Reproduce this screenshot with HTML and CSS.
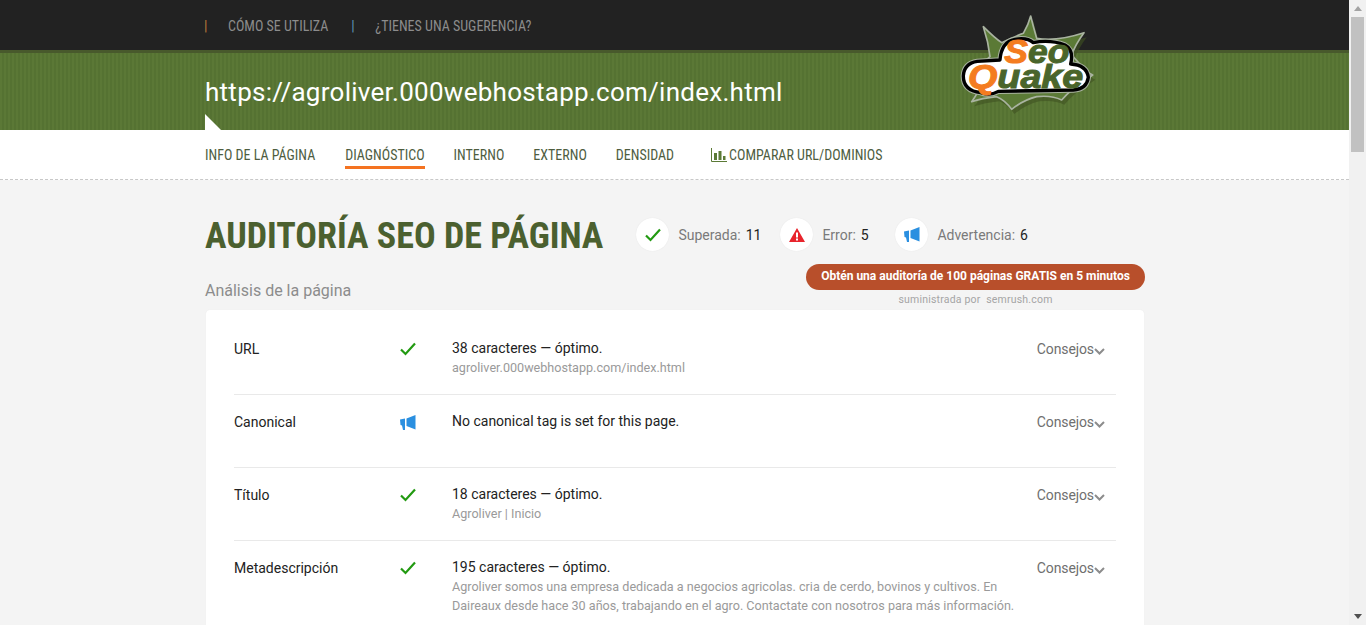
FILE: index.html
```html
<!DOCTYPE html>
<html lang="es">
<head>
<meta charset="utf-8">
<title>SeoQuake</title>
<link rel="stylesheet" href="styles.css">
</head>
<body>
<div class="page">
  <header class="topbar">
    <div class="wrap topbar-inner">
      <span class="sep sep-orange">|</span><a class="toplink">CÓMO SE UTILIZA</a>
      <span class="sep sep-blue">|</span><a class="toplink">¿TIENES UNA SUGERENCIA?</a>
    </div>
  </header>
  <section class="urlbar">
    <div class="wrap"><h1 class="url">https://agroliver.000webhostapp.com/index.html</h1></div>
    <span class="notch"></span>
  </section>
  <svg class="logo" viewBox="0 0 540 375" width="180" height="125" aria-label="SeoQuake">
    <path class="burst-shadow" d="M130 80Q165 115 185 128Q235 105 250 100Q265 75 272 48Q280 80 290 115Q350 125 432 98Q405 135 395 165L440 215L458 225L430 245Q395 265 365 300Q335 285 290 290Q250 300 215 328Q195 300 170 290Q125 295 95 305Q110 285 115 270L70 240L150 170Q145 125 130 80Z"/>
    <path class="burst" d="M130 80Q165 115 185 128Q235 105 250 100Q265 75 272 48Q280 80 290 115Q350 125 432 98Q405 135 395 165L440 215L458 225L430 245Q395 265 365 300Q335 285 290 290Q250 300 215 328Q195 300 170 290Q125 295 95 305Q110 285 115 270L70 240L150 170Q145 125 130 80Z"/>
    <path class="blob-edge" d="M70 228Q72 190 112 184L180 180Q184 125 225 118Q262 112 280 128Q330 118 375 135Q402 150 392 192Q440 195 445 232Q440 268 400 270L175 274Q150 288 122 278Q70 272 70 228Z"/>
    <path class="blob" d="M70 228Q72 190 112 184L180 180Q184 125 225 118Q262 112 280 128Q330 118 375 135Q402 150 392 192Q440 195 445 232Q440 268 400 270L175 274Q150 288 122 278Q70 272 70 228Z"/>
    <text class="logo-word"><tspan x="193" y="190" textLength="195" lengthAdjust="spacingAndGlyphs"><tspan class="logo-o">S</tspan>eo</tspan><tspan x="84" y="263" textLength="346" lengthAdjust="spacingAndGlyphs"><tspan class="logo-o">Q</tspan>uake</tspan></text>
  </svg>
  <nav class="tabs">
    <div class="wrap tabs-inner">
      <a class="tab tab-first">INFO DE LA PÁGINA</a>
      <a class="tab tab-active">DIAGNÓSTICO</a>
      <a class="tab">INTERNO</a>
      <a class="tab">EXTERNO</a>
      <a class="tab">DENSIDAD</a>
      <a class="tab tab-compare">
        <svg class="chart" viewBox="0 0 16 14" width="16" height="14"><path class="chart-axis" d="M.5 0v13.500H16"/><path d="M3 5h3v7H3zM7.500 3h3v9h-3zM12 8h2.500v4H12z"/></svg>
        COMPARAR URL/DOMINIOS</a>
    </div>
  </nav>
  <main class="wrap content">
    <div class="heading-row">
      <h2 class="title">AUDITORÍA SEO DE PÁGINA</h2>
      <div class="stats">
        <div class="stat">
          <span class="badge"><svg viewBox="0 0 16 14" width="16" height="14"><path class="ico-check" d="M1 7.500l4.500 4.500L15 1.500"/></svg></span>
          <span class="stat-label">Superada:</span><span class="stat-num">11</span>
        </div>
        <div class="stat stat-err">
          <span class="badge"><svg viewBox="0 0 16 14" width="16" height="14"><path class="ico-err" d="M8 0l8 14H0zM7 4.500v5h2v-5zM7 10.500v2h2v-2z"/></svg></span>
          <span class="stat-label">Error:</span><span class="stat-num">5</span>
        </div>
        <div class="stat stat-warn">
          <span class="badge"><svg viewBox="0 0 16 15" width="16" height="15"><path class="ico-warn" d="M15.500 0v14.500L6.500 11V3.500zM5 3.500V15H3L2 10.500.5 10 0 4.500z"/></svg></span>
          <span class="stat-label">Advertencia:</span><span class="stat-num">6</span>
        </div>
      </div>
    </div>
    <div class="sub-row">
      <h3 class="subtitle">Análisis de la página</h3>
      <div class="promo">
        <a class="promo-btn">Obtén una auditoría de 100 páginas GRATIS en 5 minutos</a>
        <span class="promo-by">suministrada por&nbsp; semrush.com</span>
      </div>
    </div>
    <section class="card">
      <div class="row">
        <div class="row-name">URL</div>
        <div class="row-ico"><svg viewBox="0 0 16 14" width="16" height="14"><path class="ico-check" d="M1 7.500l4.500 4.500L15 1.500"/></svg></div>
        <div class="row-body"><p class="row-main">38 caracteres — óptimo.</p><p class="row-sub">agroliver.000webhostapp.com/index.html</p></div>
        <a class="tips">Consejos<svg class="chev" viewBox="0 0 11 7" width="11" height="7"><path d="M1 1l4.500 4.500L10 1"/></svg></a>
      </div>
      <div class="row">
        <div class="row-name">Canonical</div>
        <div class="row-ico"><svg viewBox="0 0 16 15" width="16" height="15"><path class="ico-warn" d="M15.500 0v14.500L6.500 11V3.500zM5 3.500V15H3L2 10.500.5 10 0 4.500z"/></svg></div>
        <div class="row-body"><p class="row-main">No canonical tag is set for this page.</p></div>
        <a class="tips">Consejos<svg class="chev" viewBox="0 0 11 7" width="11" height="7"><path d="M1 1l4.500 4.500L10 1"/></svg></a>
      </div>
      <div class="row">
        <div class="row-name">Título</div>
        <div class="row-ico"><svg viewBox="0 0 16 14" width="16" height="14"><path class="ico-check" d="M1 7.500l4.500 4.500L15 1.500"/></svg></div>
        <div class="row-body"><p class="row-main">18 caracteres — óptimo.</p><p class="row-sub">Agroliver | Inicio</p></div>
        <a class="tips">Consejos<svg class="chev" viewBox="0 0 11 7" width="11" height="7"><path d="M1 1l4.500 4.500L10 1"/></svg></a>
      </div>
      <div class="row">
        <div class="row-name">Metadescripción</div>
        <div class="row-ico"><svg viewBox="0 0 16 14" width="16" height="14"><path class="ico-check" d="M1 7.500l4.500 4.500L15 1.500"/></svg></div>
        <div class="row-body"><p class="row-main">195 caracteres — óptimo.</p><p class="row-sub">Agroliver somos una empresa dedicada a negocios agricolas. cria de cerdo, bovinos y cultivos. En Daireaux desde hace 30 años, trabajando en el agro. Contactate con nosotros para más información.</p></div>
        <a class="tips">Consejos<svg class="chev" viewBox="0 0 11 7" width="11" height="7"><path d="M1 1l4.500 4.500L10 1"/></svg></a>
      </div>
    </section>
  </main>
</div>
<aside class="scrollbar">
  <span class="arrow arrow-up"></span>
  <span class="thumb"></span>
  <span class="track"></span>
  <span class="arrow arrow-down"></span>
</aside>
</body>
</html>
```

FILE: styles.css
```css
* { box-sizing: border-box; }
html, body { margin: 0; height: 625px; overflow: hidden; }
body {
  display: flex;
  background: #f4f4f4;
  font-family: Roboto, "Liberation Sans", sans-serif;
  color: #222;
}
p, h1, h2, h3 { margin: 0; font-weight: 400; }
.page { position: relative; flex: 0 0 1349px; height: 625px; overflow: hidden; }
.wrap { width: 940px; margin-left: 205px; }

.topbar { height: 50px; background: #222; }
.topbar-inner { display: flex; align-items: center; height: 51px; font-family: "Roboto Condensed", "Liberation Sans Narrow", Roboto, sans-serif; font-stretch: condensed; font-size: 14px; color: #8c8c8c; }
.sep { width: 24px; margin-left: -1px; font-size: 14px; }
.sep-orange { color: #b8793a; }
.sep-blue { color: #5f93b8; }
.toplink { margin-right: 24px; }

.urlbar {
  position: relative;
  height: 80px;
  border-top: 3px solid #48592c;
  background: repeating-linear-gradient(90deg, #5b7836 0, #5b7836 2px, #557232 2px, #557232 4px);
}
.url { padding-top: 22px; font-size: 26px; line-height: 34px; color: #fff; letter-spacing: .27px; }
.notch { position: absolute; left: 205px; bottom: 0; border-style: solid; border-width: 16px 0 0 16px; border-color: transparent transparent transparent #fff; }
.logo { position: absolute; left: 940px; top: 0; }
.burst-shadow { fill: #3f5222; opacity: .6; transform: translate(8px, 14px); }
.burst { fill: #5b7a36; stroke: #a9b3a0; stroke-width: 5; stroke-linejoin: round; }
.blob-edge { fill: none; stroke: #a9b3a0; stroke-width: 16; stroke-linejoin: round; }
.blob { fill: #fff; stroke: #000; stroke-width: 10; stroke-linejoin: round; }
.logo-word { font-family: "Liberation Sans", sans-serif; font-size: 100px; font-weight: 700; font-style: italic; fill: #4a652b; stroke: #4a652b; stroke-width: 3; }
.logo-o { fill: #f47c20; stroke: #f47c20; }

.tabs { height: 50px; background: #fff; border-bottom: 1px dashed #c8c8c8; }
.tabs-inner { display: flex; gap: 29px; height: 49px; font-family: "Roboto Condensed", "Liberation Sans Narrow", Roboto, sans-serif; font-stretch: condensed; font-size: 14px; color: #4e5d3f; }
.tab { display: flex; align-items: center; gap: 2px; height: 39px; padding-top: 14px; border-bottom: 3px solid transparent; }
.tab-first { margin-right: 1px; }
.tab-active { border-bottom-color: #f47321; }
.tab-compare { margin-left: 8px; }
.chart { fill: #5b7a36; }
.chart-axis { fill: none; stroke: #5b7a36; stroke-width: 1; }

.heading-row { display: flex; align-items: center; height: 72px; padding-top: 37px; }
.title { margin-top: 4px; font-family: "Roboto Condensed", "Liberation Sans Narrow", Roboto, sans-serif; font-stretch: condensed; font-size: 36px; line-height: 33px; font-weight: 700; color: #4b602f; }
.stats { display: flex; margin-left: 33px; font-size: 14px; }
.stat { display: flex; align-items: center; width: 144px; }
.stat-err { width: 115px; }
.badge { display: flex; align-items: center; justify-content: center; width: 33px; height: 33px; margin-right: 9px; background: #fff; border-radius: 50%; box-shadow: 0 0 1px #ddd; }
.stat-label { color: #7a7a7a; margin-right: 5px; }
.stat-num { color: #222; }
.ico-check { fill: none; stroke: #229a11; stroke-width: 2.200; }
.ico-err { fill: #e8242c; fill-rule: evenodd; }
.ico-warn { fill: #2a8fe0; }

.sub-row { display: flex; justify-content: space-between; height: 58px; }
.subtitle { padding-top: 29px; font-size: 16px; color: #8c8c8c; }
.promo { display: flex; flex-direction: column; align-items: center; padding-top: 12px; }
.promo-btn { width: 339px; height: 26px; border-radius: 13px; background: #b84f2b; color: #fff; font-size: 12px; font-weight: 700; line-height: 25px; text-align: center; }
.promo-by { font-size: 10.500px; line-height: 20px; color: #a5a5a5; letter-spacing: .2px; }

.card { margin: 0 1px; background: #fff; border-radius: 4px 4px 0 0; padding: 12px 28px 30px; box-shadow: 0 0 1px #e4e4e4; }
.row { display: flex; height: 73px; border-bottom: 1px solid #e9e9e9; font-size: 14px; padding-top: 16px; }
.row:last-child { border-bottom: 0; height: auto; }
.row-name { flex: 0 0 165px; padding-top: 3px; color: #222; }
.row-ico { flex: 0 0 53px; line-height: 0; padding: 4px 0 0 1px; }
.row-body { flex: 0 0 571px; }
.row-main { line-height: 20px; color: #222; }
.row-sub { font-size: 12.600px; line-height: 19px; color: #9a9a9a; }
.tips { margin: 0 11px 0 auto; display: flex; align-items: center; height: 20px; color: #6f6f6f; letter-spacing: -.1px; padding-top: 1px; }
.chev { fill: none; stroke: #8c8c8c; stroke-width: 2; margin-top: 5px; }

.scrollbar { flex: 0 0 17px; display: flex; flex-direction: column; align-items: center; height: 625px; background: #f1f1f1; }
.arrow { width: 0; height: 0; border-style: solid; border-color: transparent; border-width: 4px; }
.arrow-up { margin-top: 6px; border-top-width: 0; border-bottom: 5px solid #a3a3a3; }
.arrow-down { margin-bottom: 6px; border-bottom-width: 0; border-top: 5px solid #505050; }
.thumb { width: 13px; height: 135px; margin-top: 6px; background: #c1c1c1; }
.track { flex: 1; }
```
